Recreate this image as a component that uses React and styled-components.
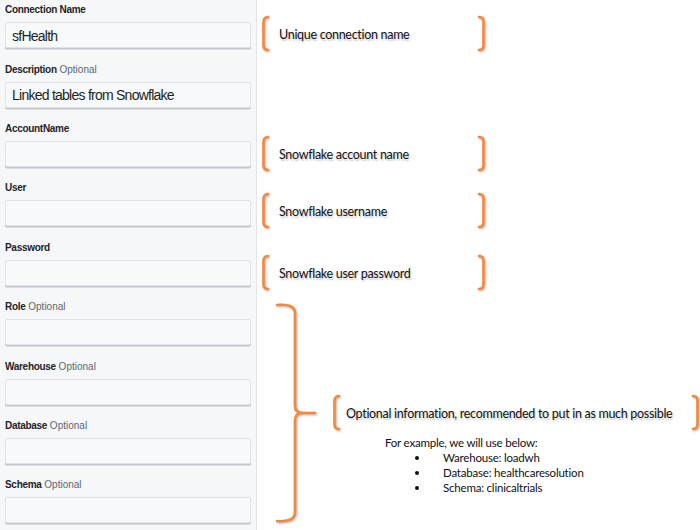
import React from "react";
import styled, { createGlobalStyle } from "styled-components";

const GlobalStyle = createGlobalStyle`
    html, body {
        margin: 0;
        padding: 0;
        background: #ffffff;
    }
    #root {
        width: 700px;
        height: 530px;
        overflow: hidden;
    }
`;

const Page = styled.div`
    display: flex;
    flex-direction: row;
    width: 700px;
    height: 530px;
    background: #fff;
`;

const FormPanel = styled.div`
    width: 253px;
    height: 530px;
    padding-left: 5px;
    background-color: #f5f7f9;
    border-right: 1px solid #e2e5e9;
`;

const Field = styled.div`
    display: flex;
    flex-direction: column;
    height: 59.4px;
    padding-top: 4.3px;
    box-sizing: border-box;
`;

const Label = styled.div`
    font-family: "Liberation Sans", Arial, sans-serif;
    font-size: 10px;
    line-height: 12px;
    letter-spacing: -0.3px;
    color: #1f2328;
    margin-bottom: 6px;
    b {
        font-weight: bold;
    }
    span {
        color: #60666e;
        letter-spacing: 0;
    }
`;

const Input = styled.input`
    box-sizing: border-box;
    width: 246px;
    height: 26px;
    margin: 0;
    padding: 1px 0 0 6px;
    border: 1px solid #e0e4e9;
    border-radius: 2px;
    box-shadow: 0 1.5px 0 #c2c7ce;
    background-color: #f7f9fb;
    font-family: "Liberation Sans", Arial, sans-serif;
    font-size: 14px;
    letter-spacing: -0.75px;
    color: #1b1f24;
    outline: none;
`;

const Notes = styled.div`
    display: flex;
    flex-direction: column;
    flex: 1;
    font-family: Lato, "Open Sans", sans-serif;
    color: #111;
`;

const Callout = styled.div`
    display: flex;
    align-items: center;
    justify-content: space-between;
    width: ${(p) => p.width || 225}px;
    height: 36px;
    margin-top: ${(p) => p.top}px;
    margin-left: ${(p) => p.left || 4}px;
`;

const CalloutText = styled.div`
    flex: 1;
    padding: 3px 0 0 ${(p) => p.indent || 9}px;
    font-size: 12.5px;
    line-height: 16px;
    letter-spacing: -0.3px;
    white-space: nowrap;
    text-shadow: 1px 1.5px 1.5px rgba(0, 0, 0, 0.22);
`;

const Shadowed = styled.svg`
    display: block;
    flex: none;
    filter: drop-shadow(1px 1.5px 1px rgba(0, 0, 0, 0.3));
`;

const BraceGroup = styled.div`
    display: flex;
    flex-direction: row;
    align-items: flex-start;
    margin-top: 12px;
    margin-left: 17px;
`;

const BraceSide = styled.div`
    display: flex;
    flex-direction: column;
    margin-top: 92px;
    margin-left: 10px;
`;

const Example = styled.div`
    margin-top: 5px;
    margin-left: 57px;
    font-size: 11.5px;
    line-height: 15px;
    letter-spacing: -0.2px;
    ul {
        list-style: none;
        margin: 0;
        padding: 0 0 0 30px;
    }
    li {
        display: flex;
        align-items: center;
    }
    li::before {
        content: "";
        width: 4px;
        height: 4px;
        border-radius: 50%;
        background: #111;
        margin-right: 24px;
    }
`;

const ORANGE = "#f5893b";

const LeftBracket = () => (
    <Shadowed width="9" height="37" viewBox="0 0 9 37">
        <path d="M7 2 Q2.5 2 2.5 7 V30 Q2.5 35 7 35" fill="none" stroke={ORANGE} strokeWidth="2.6" strokeLinecap="round" />
    </Shadowed>
);

const RightBracket = () => (
    <Shadowed width="9" height="37" viewBox="0 0 9 37">
        <path d="M2 2 Q6.5 2 6.5 7 V30 Q6.5 35 2 35" fill="none" stroke={ORANGE} strokeWidth="2.6" strokeLinecap="round" />
    </Shadowed>
);

const CurlyBrace = () => (
    <Shadowed width="44" height="222" viewBox="0 0 44 222">
        <path
            d="M3 3 Q21 1.5 21 11 V104 Q21 111 29 111 H41 M29 111 Q21 111 21 118 V210 Q21 220.5 3 219"
            fill="none"
            stroke={ORANGE}
            strokeWidth="2.6"
            strokeLinecap="round"
        />
    </Shadowed>
);

const fields = [
    { label: "Connection Name", value: "sfHealth" },
    { label: "Description", optional: true, value: "Linked tables from Snowflake" },
    { label: "AccountName" },
    { label: "User" },
    { label: "Password" },
    { label: "Role", optional: true },
    { label: "Warehouse", optional: true },
    { label: "Database", optional: true },
    { label: "Schema", optional: true },
];

const notes = [
    { text: "Unique connection name", top: 15 },
    { text: "Snowflake account name", top: 84 },
    { text: "Snowflake username", top: 21 },
    { text: "Snowflake user password", top: 26 },
];

const App = () => (
    <>
        <GlobalStyle />
        <Page>
            <FormPanel>
                {fields.map((f) => (
                    <Field key={f.label}>
                        <Label>
                            <b>{f.label}</b>
                            {f.optional ? <span> Optional</span> : null}
                        </Label>
                        <Input type="text" defaultValue={f.value || ""} readOnly />
                    </Field>
                ))}
            </FormPanel>
            <Notes>
                {notes.map((n) => (
                    <Callout key={n.text} top={n.top}>
                        <LeftBracket />
                        <CalloutText>{n.text}</CalloutText>
                        <RightBracket />
                    </Callout>
                ))}
                <BraceGroup>
                    <CurlyBrace />
                    <BraceSide>
                        <Callout top={0} left={0} width={368}>
                            <LeftBracket />
                            <CalloutText indent={5}>
                                Optional information, recommended to put in as much possible
                            </CalloutText>
                            <RightBracket />
                        </Callout>
                        <Example>
                            For example, we will use below:
                            <ul>
                                <li>Warehouse: loadwh</li>
                                <li>Database: healthcaresolution</li>
                                <li>Schema: clinicaltrials</li>
                            </ul>
                        </Example>
                    </BraceSide>
                </BraceGroup>
            </Notes>
        </Page>
    </>
);

export default App;
